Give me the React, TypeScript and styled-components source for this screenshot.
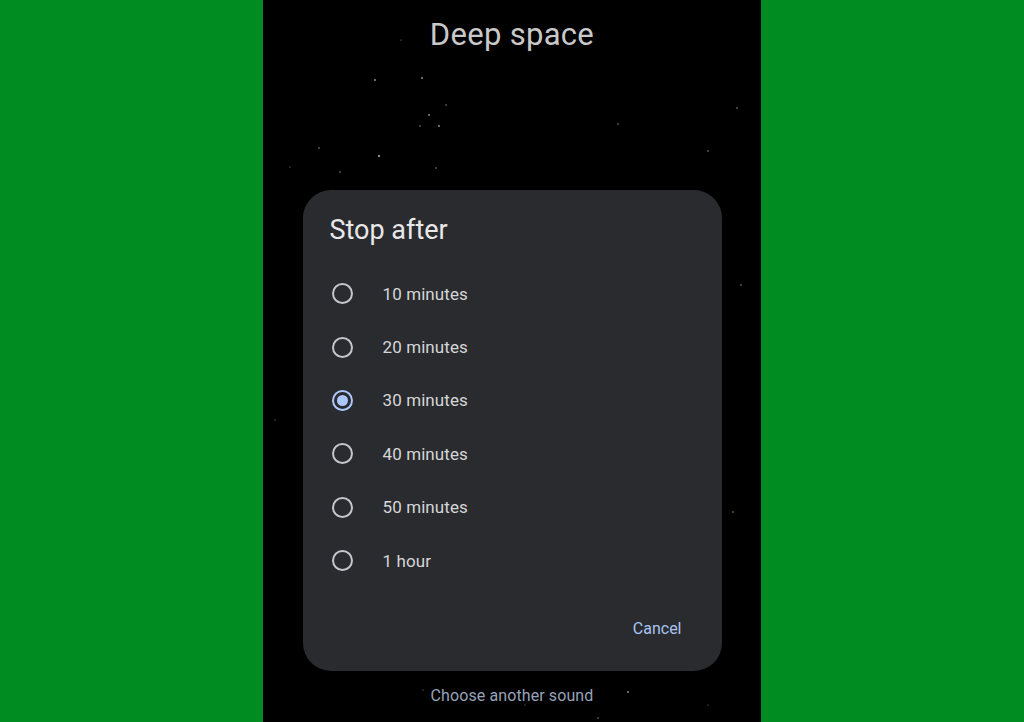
import { useState } from "react";
import styled, { createGlobalStyle } from "styled-components";

const GlobalStyle = createGlobalStyle`
  html, body {
    margin: 0;
    padding: 0;
    background: #008c21;
  }
  body {
    font-family: Roboto, "Noto Sans", sans-serif;
  }
`;

const Page = styled.div`
  width: 1024px;
  height: 722px;
  display: flex;
  justify-content: center;
  background: #008c21;
  overflow: hidden;
`;

const Phone = styled.div`
  position: relative;
  width: 498px;
  height: 722px;
  background: #000;
  display: flex;
  flex-direction: column;
  align-items: center;
`;

const Stars = styled.svg`
  position: absolute;
  inset: 0;
  pointer-events: none;
`;

const Title = styled.h1`
  position: relative;
  margin: 17px 0 0;
  font-size: 31px;
  font-weight: 400;
  color: #c9c9c9;
  line-height: 36px;
  letter-spacing: 0.3px;
`;

const Dialog = styled.div`
  position: relative;
  margin-top: 137px;
  width: 419px;
  height: 481px;
  box-sizing: border-box;
  background: #2a2b2f;
  border-radius: 28px;
  padding: 24px 27px 0 27px;
  display: flex;
  flex-direction: column;
`;

const DialogTitle = styled.h2`
  margin: 0 0 21px;
  font-size: 27px;
  font-weight: 400;
  color: #e8e8e8;
  line-height: 32px;
`;

const Options = styled.div`
  display: flex;
  flex-direction: column;
`;

const Option = styled.label`
  height: 53.4px;
  display: flex;
  align-items: center;
  gap: 30px;
  cursor: pointer;
`;

const Radio = styled.span<{ $on: boolean }>`
  width: 21px;
  height: 21px;
  margin-left: 2px;
  box-sizing: border-box;
  border-radius: 50%;
  border: 2px solid ${(p) => (p.$on ? "#abc7fb" : "#c4c6cc")};
  display: flex;
  align-items: center;
  justify-content: center;
  &::after {
    content: "";
    width: 11px;
    height: 11px;
    border-radius: 50%;
    background: #abc7fb;
    display: ${(p) => (p.$on ? "block" : "none")};
  }
`;

const OptionText = styled.span`
  font-size: 17px;
  color: #d6d6d8;
  letter-spacing: 0.1px;
`;

const Actions = styled.div`
  display: flex;
  justify-content: flex-end;
  margin-top: 32px;
  padding-right: 13px;
`;

const TextButton = styled.button`
  background: none;
  border: none;
  padding: 0;
  font-family: inherit;
  font-size: 16px;
  color: #a9c4f2;
  cursor: pointer;
`;

const Footer = styled.div`
  position: relative;
  margin-top: 15px;
  font-size: 16px;
  color: #96a3b8;
  letter-spacing: 0.1px;
`;

const options = ["10 minutes", "20 minutes", "30 minutes", "40 minutes", "50 minutes", "1 hour"];

const starDots: [number, number, number][] = [
  [112, 80, 1], [159, 78, 1], [166, 115, 1], [183, 105, 0.8], [176, 126, 1],
  [157, 126, 0.8], [56, 148, 0.8], [116, 156, 1.2], [77, 172, 0.8], [173, 168, 0.8],
  [355, 124, 0.8], [445, 151, 0.8], [474, 108, 0.8], [27, 167, 0.6], [138, 40, 0.6],
  [478, 285, 0.8], [470, 512, 0.8], [12, 420, 0.6], [365, 692, 1], [335, 718, 0.8],
  [262, 705, 0.6], [160, 690, 0.6], [445, 705, 0.6],
];

export default function App() {
  const [choice, setChoice] = useState(2);
  return (
    <Page>
      <GlobalStyle />
      <Phone>
        <Stars width="498" height="722">
          {starDots.map(([x, y, r], i) => (
            <circle key={i} cx={x} cy={y} r={r} fill="#8a8a8a" />
          ))}
        </Stars>
        <Title>Deep space</Title>
        <Dialog>
          <DialogTitle>Stop after</DialogTitle>
          <Options>
            {options.map((o, i) => (
              <Option key={o} onClick={() => setChoice(i)}>
                <Radio $on={choice === i} />
                <OptionText>{o}</OptionText>
              </Option>
            ))}
          </Options>
          <Actions>
            <TextButton>Cancel</TextButton>
          </Actions>
        </Dialog>
        <Footer>Choose another sound</Footer>
      </Phone>
    </Page>
  );
}
